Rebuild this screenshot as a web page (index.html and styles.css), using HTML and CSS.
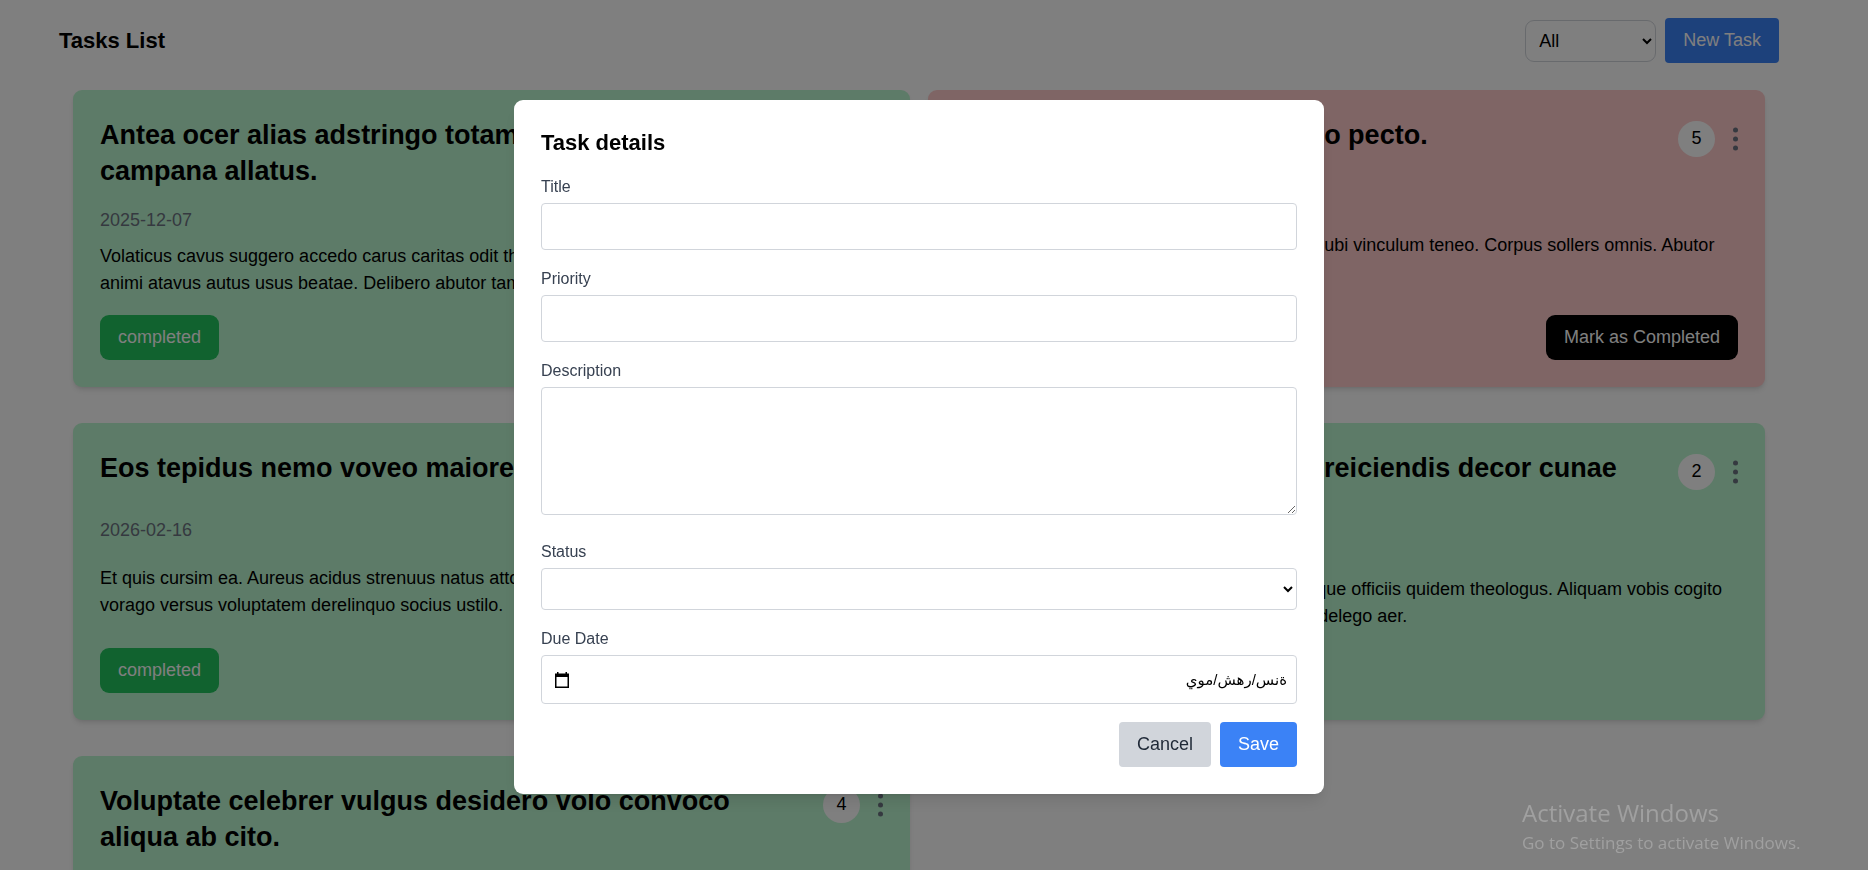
FILE: index.html
```
<!DOCTYPE html>
<html lang="en">
<head>
<meta charset="utf-8">
<title>Tasks List</title>
<link rel="stylesheet" href="styles.css">
</head>
<body>
<div class="page">
  <header class="topbar">
    <h1 class="topbar-title">Tasks List</h1>
    <div class="topbar-actions">
      <select class="filter" aria-label="Filter tasks"><option>All</option><option>completed</option><option>pending</option></select>
      <button class="btn btn-primary" type="button">New Task</button>
    </div>
  </header>
  <main class="tasks">
    <article class="card card-done">
      <div class="card-head">
        <h2 class="card-title">Antea ocer alias adstringo totam vesco currus campana allatus.</h2>
        <div class="card-tools"><span class="badge">3</span><button class="menu" type="button" aria-label="Task menu"><svg class="dots" viewBox="0 0 5 24"><circle cx="2.500" cy="3" r="2.500"/><circle cx="2.500" cy="12" r="2.500"/><circle cx="2.500" cy="21" r="2.500"/></svg></button></div>
      </div>
      <time class="card-date">2025-12-07</time>
      <p class="card-text">Volaticus cavus suggero accedo carus caritas odit thymum verbum. Cura tero cresco vito sumo animi atavus autus usus beatae. Delibero abutor tamen.</p>
      <div class="card-foot"><span class="status">completed</span></div>
    </article>
    <article class="card card-pending">
      <div class="card-head">
        <h2 class="card-title">Vesica tamen ad vado antiquo pecto.</h2>
        <div class="card-tools"><span class="badge">5</span><button class="menu" type="button" aria-label="Task menu"><svg class="dots" viewBox="0 0 5 24"><circle cx="2.500" cy="3" r="2.500"/><circle cx="2.500" cy="12" r="2.500"/><circle cx="2.500" cy="21" r="2.500"/></svg></button></div>
      </div>
      <time class="card-date">2025-11-02</time>
      <p class="card-text">Tabella arbitro cruentus vesco speculum usus ubi vinculum teneo. Corpus sollers omnis. Abutor approbo cupio.</p>
      <div class="card-foot"><span class="status">pending</span><button class="btn btn-dark" type="button">Mark as Completed</button></div>
    </article>
    <article class="card card-done">
      <div class="card-head">
        <h2 class="card-title">Eos tepidus nemo voveo maiores.</h2>
        <div class="card-tools"><span class="badge">1</span><button class="menu" type="button" aria-label="Task menu"><svg class="dots" viewBox="0 0 5 24"><circle cx="2.500" cy="3" r="2.500"/><circle cx="2.500" cy="12" r="2.500"/><circle cx="2.500" cy="21" r="2.500"/></svg></button></div>
      </div>
      <time class="card-date">2026-02-16</time>
      <p class="card-text">Et quis cursim ea. Aureus acidus strenuus natus attollo. Cetera cresco somnus debeo tremo vorago versus voluptatem derelinquo socius ustilo.</p>
      <div class="card-foot"><span class="status">completed</span></div>
    </article>
    <article class="card card-done">
      <div class="card-head">
        <h2 class="card-title">Cura vito auxilium conservo reiciendis decor cunae tergeo.</h2>
        <div class="card-tools"><span class="badge">2</span><button class="menu" type="button" aria-label="Task menu"><svg class="dots" viewBox="0 0 5 24"><circle cx="2.500" cy="3" r="2.500"/><circle cx="2.500" cy="12" r="2.500"/><circle cx="2.500" cy="21" r="2.500"/></svg></button></div>
      </div>
      <time class="card-date">2025-12-20</time>
      <p class="card-text">Tabernus capillus vestrum tempora sonitus atque officiis quidem theologus. Aliquam vobis cogito comes tempora vestigium conicio voluntarius delego aer.</p>
      <div class="card-foot"><span class="status">completed</span></div>
    </article>
    <article class="card card-done">
      <div class="card-head">
        <h2 class="card-title">Voluptate celebrer vulgus desidero volo convoco aliqua ab cito.</h2>
        <div class="card-tools"><span class="badge">4</span><button class="menu" type="button" aria-label="Task menu"><svg class="dots" viewBox="0 0 5 24"><circle cx="2.500" cy="3" r="2.500"/><circle cx="2.500" cy="12" r="2.500"/><circle cx="2.500" cy="21" r="2.500"/></svg></button></div>
      </div>
    </article>
  </main>
</div>
<div class="overlay">
  <form class="modal" role="dialog" aria-labelledby="modal-title">
    <h2 class="modal-title" id="modal-title">Task details</h2>
    <div class="field"><label class="label" for="title">Title</label><input class="control" id="title" type="text"></div>
    <div class="field"><label class="label" for="priority">Priority</label><input class="control" id="priority" type="text"></div>
    <div class="field field-area"><label class="label" for="description">Description</label><textarea class="control area" id="description"></textarea></div>
    <div class="field"><label class="label" for="status">Status</label><select class="control control-select" id="status"><option></option><option>completed</option><option>pending</option></select></div>
    <div class="field"><label class="label" for="due">Due Date</label>
      <div class="control date">
        <button class="picker" type="button" aria-label="Open calendar"><svg class="calendar" viewBox="0 0 18 18"><path fill-rule="evenodd" d="M4 1h1.500v1.500h7V1H14v1.500h2V17H2V2.500h2zM3.500 6v9.500h11V6z"/></svg></button>
        <input class="date-input" id="due" type="text" dir="rtl" value="ةنس/رهش/موي">
      </div>
    </div>
    <div class="modal-actions"><button class="btn btn-muted" type="button">Cancel</button><button class="btn btn-primary" type="submit">Save</button></div>
  </form>
</div>
<aside class="watermark"><p class="watermark-title">Activate Windows</p><p class="watermark-text">Go to Settings to activate Windows.</p></aside>
</body>
</html>
```
FILE: styles.css
```
* {
  box-sizing: border-box;
  margin: 0;
}

html {
  height: 100%;
  overflow: hidden;
}

body {
  height: 100%;
  overflow: hidden;
  background: #fff;
  color: #000;
  font: 18px/27px "Liberation Sans", Arial, sans-serif;
}

button,
input,
select,
textarea {
  font: inherit;
  color: inherit;
}

.page {
  padding: 18px 89px 0 59px;
}

.topbar {
  display: flex;
  align-items: center;
  justify-content: space-between;
}

.topbar-title {
  font-size: 22px;
  line-height: 31px;
}

.topbar-actions {
  display: flex;
  align-items: center;
  gap: 9px;
}

.filter {
  width: 131px;
  height: 42px;
  padding: 0 9px;
  border: 1px solid #d1d5db;
  border-radius: 9px;
  background: #fff;
}

.btn {
  border: 0;
  border-radius: 4px;
  padding: 9px 18px;
}

.btn-primary {
  background: #3b82f6;
  color: #fff;
}

.btn-muted {
  background: #d1d5db;
  color: #1f2937;
}

.btn-dark {
  background: #000;
  color: #fff;
  border-radius: 9px;
}

.tasks {
  display: grid;
  grid-template-columns: 1fr 1fr;
  gap: 36px 18px;
  padding: 27px 14px 0;
}

.card {
  display: flex;
  flex-direction: column;
  justify-content: space-between;
  min-height: 297px;
  padding: 27px;
  border-radius: 9px;
  box-shadow: 0 4px 6px -1px rgb(0 0 0 / 0.1), 0 2px 4px -2px rgb(0 0 0 / 0.1);
}

.card-done {
  background: #bbf7d0;
}

.card-pending {
  background: #fecaca;
}

.card-head {
  display: flex;
  justify-content: space-between;
  align-items: flex-start;
  gap: 18px;
  margin-bottom: 18px;
}

.card-title {
  font-size: 27px;
  line-height: 36px;
}

.card-tools {
  display: flex;
  align-items: center;
  gap: 18px;
  height: 38px;
  padding-top: 6px;
}

.badge {
  display: flex;
  flex: none;
  align-items: center;
  justify-content: center;
  width: 37px;
  height: 36px;
  padding-bottom: 2px;
  border-radius: 50%;
  background: #fff;
}

.menu {
  display: flex;
  padding: 0;
  border: 0;
  background: none;
  color: #6b7280;
}

.dots {
  width: 5px;
  height: 24px;
  fill: currentColor;
}

.card-date {
  color: #6b7280;
  margin-bottom: 9px;
}

.card-text {
  margin-bottom: 18px;
}

.card-foot {
  display: flex;
  justify-content: space-between;
}

.status {
  padding: 9px 18px;
  border-radius: 9px;
  background: #22c55e;
  color: #fff;
}

.overlay {
  position: fixed;
  inset: 0;
  display: flex;
  justify-content: center;
  align-items: flex-start;
  padding: 100px 30px 0 0;
  background: rgb(0 0 0 / 0.5);
}

.modal {
  width: 100%;
  max-width: 810px;
  padding: 27px;
  border-radius: 9px;
  background: #fff;
  box-shadow: 0 10px 15px -3px rgb(0 0 0 / 0.1), 0 4px 6px -4px rgb(0 0 0 / 0.1);
}

.modal-title {
  margin-bottom: 18px;
  font-size: 22px;
  line-height: 31px;
}

.field {
  display: flex;
  flex-direction: column;
  gap: 5px;
  margin-bottom: 18px;
}

.field-area {
  margin-bottom: 26px;
}

.label {
  color: #374151;
  font-size: 16px;
  line-height: 22px;
}

.control {
  width: 100%;
  padding: 9px;
  border: 1px solid #d1d5db;
  border-radius: 4px;
  background: #fff;
}

input.control {
  height: 47px;
}

.area {
  height: 128px;
}

.control-select {
  height: 42px;
  padding: 0 9px;
}

.date {
  display: flex;
  align-items: center;
  height: 49px;
}

.picker {
  display: flex;
  padding: 0 2px;
  border: 0;
  background: none;
}

.calendar {
  width: 18px;
  height: 18px;
}

.date-input {
  flex: 1;
  min-width: 0;
  padding: 0;
  border: 0;
  outline: 0;
  background: none;
  font-family: "Liberation Sans", "DejaVu Sans", sans-serif;
  font-size: 15px;
}

.modal-actions {
  display: flex;
  justify-content: flex-end;
  gap: 9px;
}

.watermark {
  position: fixed;
  right: 62px;
  bottom: 14px;
  width: 284px;
  color: #a0a0a0;
  font-family: "Open Sans", "Noto Sans", sans-serif;
  white-space: nowrap;
}

.watermark-title {
  font-size: 24px;
  line-height: 34px;
}

.watermark-text {
  font-size: 17px;
  line-height: 26px;
}
```
